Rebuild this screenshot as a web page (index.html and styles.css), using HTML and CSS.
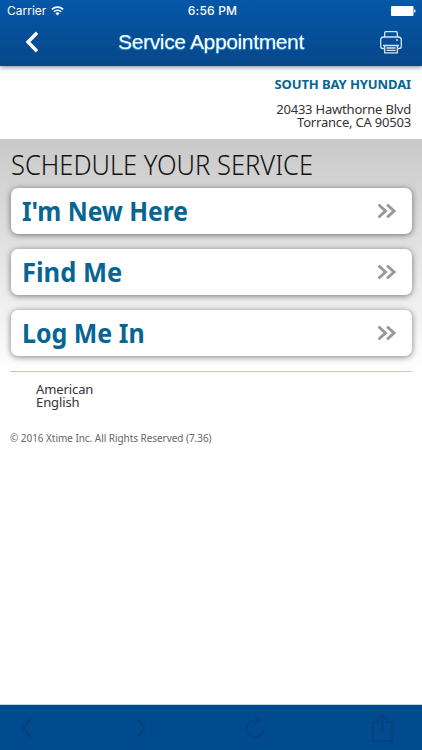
FILE: index.html
```html
<!DOCTYPE html>
<html lang="en">
<head>
    <meta charset="UTF-8">
    <meta name="viewport" content="width=device-width, initial-scale=1.0">
    <title>Service Appointment</title>
    <link rel="stylesheet" href="styles.css">
</head>
<body>
    <header class="top">
        <div class="status">
            <div class="carrier">
                <span>Carrier</span>
                <svg width="13" height="10" viewBox="0 0 13 10" fill="none" stroke="#fff" stroke-width="1.6">
                    <path d="M.8 3.4a8.3 8.3 0 0 1 11.4 0M2.8 5.7a5.3 5.3 0 0 1 7.4 0"/>
                    <path d="M6.5 9.5 4.4 7.4a3 3 0 0 1 4.2 0z" fill="#fff" stroke="none"/>
                </svg>
            </div>
            <div class="time">6:56 PM</div>
            <svg class="battery" width="25" height="10" viewBox="0 0 25 10" fill="#fff">
                <rect width="22.5" height="10" rx="1"/>
                <path d="M23.2 3.2q1.4.3 1.4 1.8t-1.4 1.8z"/>
            </svg>
        </div>
        <div class="nav">
            <svg width="14" height="22" viewBox="0 0 14 22" fill="none" stroke="#fff" stroke-width="3.4">
                <path d="M12 1.8 3 11l9 9.200"/>
            </svg>
            <h1>Service Appointment</h1>
            <svg width="22" height="23" viewBox="0 0 22 23" fill="none" stroke="#d3e5f6" stroke-width="1.3">
                <path d="M4.700 6V1.700q0-1 1-1h10.600q1 0 1 1V6"/>
                <path d="M4.500 17.500H3q-2.300 0-2.300-2.300V9q0-3 3-3h14.600q3 0 3 3v6.200q0 2.300-2.300 2.300h-1.500"/>
                <path d="M3 14.500h16M4.700 14.500v7.300h12.600v-7.300M6.500 17h9M6.500 19.300h9"/>
                <circle cx="17" cy="9" r=".9" fill="#d3e5f6" stroke="none"/>
            </svg>
        </div>
    </header>

    <div class="dealer">
        <div class="dealer-name">SOUTH BAY HYUNDAI</div>
        <div class="address">20433 Hawthorne Blvd<br>Torrance, CA 90503</div>
    </div>

    <main class="schedule">
        <h2><span>SCHEDULE YOUR SERVICE</span></h2>
        <a class="choice">
            <span class="new">I'm New Here</span>
            <svg class="arrows" width="19" height="14" viewBox="0 0 19 14"><path d="M1.500 1.500 7.500 7l-6 5.500M10 1.500 16 7l-6 5.500"/></svg>
        </a>
        <a class="choice">
            <span class="find">Find Me</span>
            <svg class="arrows" width="19" height="14" viewBox="0 0 19 14"><path d="M1.500 1.500 7.500 7l-6 5.500M10 1.500 16 7l-6 5.500"/></svg>
        </a>
        <a class="choice">
            <span class="login">Log Me In</span>
            <svg class="arrows" width="19" height="14" viewBox="0 0 19 14"><path d="M1.500 1.500 7.500 7l-6 5.500M10 1.500 16 7l-6 5.500"/></svg>
        </a>
    </main>

    <footer class="info">
        <div class="language">American<br>English</div>
        <div class="copyright">© 2016 Xtime Inc. All Rights Reserved (7.36)</div>
    </footer>

    <div class="toolbar">
        <svg width="12" height="22" viewBox="0 0 12 22"><path d="M11 1 1.500 11 11 21"/></svg>
        <svg width="12" height="22" viewBox="0 0 12 22"><path d="M1 1l9.500 10L1 21"/></svg>
        <svg class="reload" width="20" height="23" viewBox="0 0 20 23"><path d="M10.500 4.500a8.500 8.500 0 1 0 8 8.500"/><path class="solid" d="M10 0l8 4-8 4.500z"/></svg>
        <svg width="21" height="28" viewBox="0 0 21 28"><path d="M7 8H1v19h19V8h-6M10.500 17V1.500M6 5.500l4.500-4.500L15 5.500"/></svg>
    </div>
</body>
</html>
```

FILE: styles.css
```css
* {
    box-sizing: border-box;
}
body {
    font-family: "Noto Sans", "Open Sans", sans-serif;
    background: #fff;
    color: #333;
    margin: 0;
    height: 750px;
    display: flex;
    flex-direction: column;
    overflow: hidden;
}
svg {
    display: block;
    flex-shrink: 0;
}
.top {
    position: relative;
    height: 66px;
    background: linear-gradient(#0558a8, #06478a);
    color: #fff;
    box-shadow: 0 1px 5px rgba(0, 0, 0, 0.5);
}
.status {
    display: grid;
    grid-template-columns: 1fr auto 1fr;
    align-items: center;
    height: 22px;
    padding: 0 6px 0 7px;
    font: 12px/22px Inter, sans-serif;
}
.carrier {
    display: flex;
    align-items: center;
    gap: 5px;
}
.time {
    padding-left: 2px;
    font-weight: 500;
    letter-spacing: 0.2px;
}
.battery {
    justify-self: end;
}
.nav {
    display: flex;
    align-items: center;
    justify-content: space-between;
    height: 40px;
    padding: 0 20px 0 25px;
}
.nav h1 {
    margin: 0 0 0 3px;
    font: 21px/40px "Liberation Sans", Arial, sans-serif;
    letter-spacing: -0.36px;
    text-shadow: 0 1px 1px #2f9cf0;
}
.dealer {
    height: 73px;
    padding: 9px 11px 0;
    text-align: right;
}
.dealer-name {
    font-size: 13px;
    line-height: 19px;
    font-weight: 700;
    letter-spacing: -0.1px;
    color: #066593;
}
.address {
    margin-top: 9px;
    font-size: 13px;
    line-height: 13px;
    letter-spacing: -0.2px;
}
.schedule {
    display: flex;
    flex-direction: column;
    gap: 15px;
    height: 232px;
    padding: 10px 10.5px 0;
    background: linear-gradient(#c9c9c9, #fff);
}
.schedule h2 {
    margin: 0 0 -8px;
    height: 32px;
    font-size: 27px;
    line-height: 32px;
    font-weight: 300;
    color: #111;
    white-space: nowrap;
}
.schedule h2 span,
.choice span {
    display: inline-block;
    transform-origin: left center;
}
.schedule h2 span {
    transform: scaleX(0.945);
}
.choice {
    display: flex;
    align-items: center;
    justify-content: space-between;
    height: 46px;
    padding: 0 15px 1px 11px;
    border-radius: 7px;
    background: #fff;
    box-shadow: 0 1px 6px rgba(0, 0, 0, 0.5);
    font-size: 26px;
    line-height: 40px;
    font-weight: 700;
    color: #066593;
}
/* horizontal condensing of the button labels */
.new {
    transform: scaleX(0.945);
}
.find {
    transform: scaleX(0.98);
}
.login {
    transform: scaleX(0.96);
}
.arrows {
    fill: none;
    stroke: #999;
    stroke-width: 3;
    stroke-linecap: round;
}
.info {
    flex: 1;
    margin: 0 10px;
    border-top: 1px solid #a9d0e8;
}
.language {
    padding: 11px 26px 0;
    font-size: 13px;
    line-height: 13px;
    letter-spacing: -0.1px;
}
.copyright {
    margin-top: 21px;
    font-size: 10px;
    line-height: 16px;
    letter-spacing: -0.05px;
    color: #666;
}
.toolbar {
    display: flex;
    align-items: center;
    justify-content: space-between;
    height: 46px;
    padding: 0 29px 0 21px;
    background: #004b8d;
    border-top: 1px solid #b8d8ea;
}
.toolbar svg {
    fill: none;
    stroke: #07417e;
    stroke-width: 2;
}
.toolbar .reload {
    margin: 0 5px 0 -5px;
}
.toolbar .solid {
    fill: #07417e;
    stroke: none;
}
```
